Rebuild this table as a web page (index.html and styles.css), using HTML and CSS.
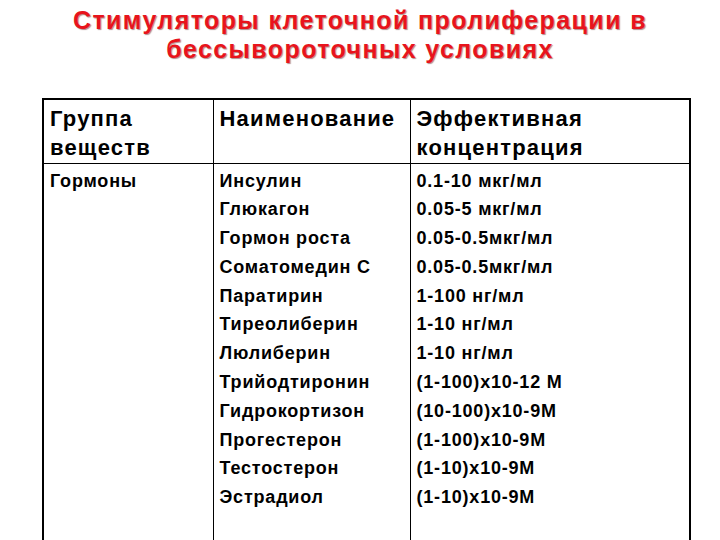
FILE: index.html
```html
<!DOCTYPE html>
<html lang="ru">
<head>
<meta charset="utf-8">
<link rel="stylesheet" href="styles.css">
</head>
<body>
<h1 class="title">Стимуляторы клеточной пролиферации в<br>бессывороточных условиях</h1>
<table class="grid">
  <colgroup>
    <col class="c1"><col class="c2"><col class="c3">
  </colgroup>
  <tr class="head">
    <td>Группа<br>веществ</td>
    <td>Наименование</td>
    <td>Эффективная<br>концентрация</td>
  </tr>
  <tr class="body">
    <td>Гормоны</td>
    <td>Инсулин<br>Глюкагон<br>Гормон роста<br>Соматомедин С<br>Паратирин<br>Тиреолиберин<br>Люлиберин<br>Трийодтиронин<br>Гидрокортизон<br>Прогестерон<br>Тестостерон<br>Эстрадиол</td>
    <td>0.1-10 мкг/мл<br>0.05-5 мкг/мл<br>0.05-0.5мкг/мл<br>0.05-0.5мкг/мл<br>1-100 нг/мл<br>1-10 нг/мл<br>1-10 нг/мл<br>(1-100)x10-12 M<br>(10-100)x10-9M<br>(1-100)x10-9M<br>(1-10)x10-9M<br>(1-10)x10-9M</td>
  </tr>
</table>
</body>
</html>
```
FILE: styles.css
```css
html, body {
  margin: 0;
  padding: 0;
  background: #fff;
  width: 720px;
  height: 540px;
  overflow: hidden;
}
body {
  font-family: "Liberation Sans", Arial, sans-serif;
  color: #000;
}
.title {
  margin: 0;
  padding-top: 6px;
  text-align: center;
  font-size: 25px;
  line-height: 29px;
  letter-spacing: 1.4px;
  font-weight: bold;
  color: #e8141c;
  text-shadow: 1px 1px 1px rgba(80, 0, 0, 0.45);
}
.grid {
  margin: 34px 0 0 42px;
  width: 649px;
  border-collapse: collapse;
  border: 2px solid #000;
}
.c1 { width: 170px; }
.c2 { width: 197px; }
.c3 { width: 280px; }
.grid td {
  border: 1px solid #000;
  vertical-align: top;
  text-align: left;
  font-weight: bold;
  padding: 0 6px;
}
.head td {
  font-size: 22px;
  line-height: 29px;
  letter-spacing: 1.2px;
  height: 64px;
  padding-top: 4px;
  padding-bottom: 0;
  box-sizing: border-box;
}
.body td {
  font-size: 18px;
  line-height: 28.8px;
  letter-spacing: 0.8px;
  padding-top: 3px;
  height: 420px;
}
```
